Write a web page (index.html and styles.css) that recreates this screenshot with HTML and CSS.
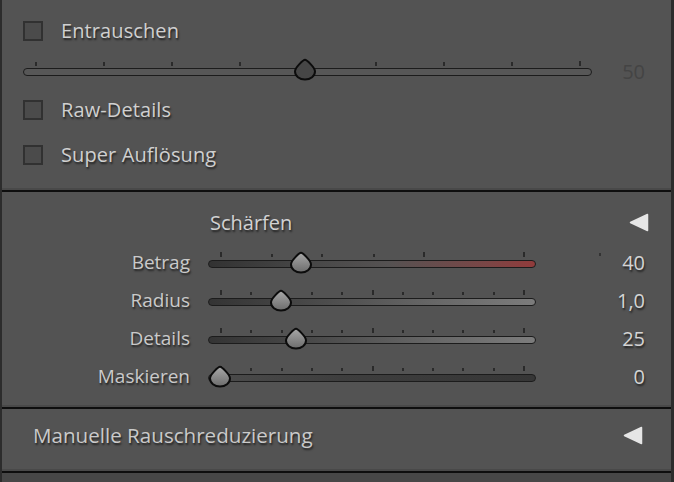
FILE: index.html
```html
<!DOCTYPE html>
<html>
<head>
<meta charset="utf-8">
<link rel="stylesheet" href="styles.css">
</head>
<body>
<div class="panel">
  <section class="sec sec-noise">
    <div class="check-row">
      <span class="box"></span><span class="label">Entrauschen</span>
    </div>
    <div class="noise-row">
      <div class="slider slider-noise">
        <div class="track t-plain"></div>
        <i class="tick" style="left:12px"></i>
        <i class="tick" style="left:80px"></i>
        <i class="tick" style="left:148px"></i>
        <i class="tick" style="left:216px"></i>
        <i class="tick" style="left:352px"></i>
        <i class="tick" style="left:420px"></i>
        <i class="tick" style="left:488px"></i>
        <i class="tick major" style="left:556px"></i>
        <svg class="thumb thumb-dark" style="left:270px" width="24" height="23" viewBox="0 0 24 23"><path d="M12 1.8 C13.6 1.8 22 9.5 22 13.5 A10 8 0 0 1 2 13.5 C2 9.5 10.4 1.8 12 1.8Z"/></svg>
      </div>
      <span class="value dim">50</span>
    </div>
    <div class="check-row raw">
      <span class="box"></span><span class="label">Raw-Details</span>
    </div>
    <div class="check-row super">
      <span class="box"></span><span class="label">Super Auflösung</span>
    </div>
  </section>

  <section class="sec sec-sharp">
    <div class="sharp-head">
      <span class="title">Schärfen</span>
      <svg class="tri" width="20" height="19" viewBox="0 0 20 19"><polygon points="1.5,9.5 18.5,1.5 18.5,17.5"/></svg>
    </div>
    <div class="sharp-grid">
      <span class="s-label">Betrag</span>
      <div class="slider">
        <div class="track t-red"></div>
        <i class="tick major" style="left:12px"></i>
        <i class="tick" style="left:63px"></i>
        <i class="tick" style="left:113px"></i>
        <i class="tick" style="left:165px"></i>
        <i class="tick major" style="left:215px"></i>
        <i class="tick major" style="left:315px"></i>
        <i class="tick stray" style="left:391px"></i>
        <svg class="thumb" style="left:81px" width="24" height="23" viewBox="0 0 24 23"><defs><linearGradient id="g1" x1="0" y1="0" x2="0" y2="1"><stop offset="0" stop-color="#a8a8a8"/><stop offset="1" stop-color="#6c6c6c"/></linearGradient></defs><path fill="url(#g1)" d="M12 1.8 C13.6 1.8 22 9.5 22 13.5 A10 8 0 0 1 2 13.5 C2 9.5 10.4 1.8 12 1.8Z"/></svg>
      </div>
      <span class="value">40</span>

      <span class="s-label">Radius</span>
      <div class="slider">
        <div class="track t-gray"></div>
        <i class="tick major" style="left:12px"></i>
        <i class="tick" style="left:42px"></i>
        <i class="tick" style="left:73px"></i>
        <i class="tick" style="left:103px"></i>
        <i class="tick" style="left:133px"></i>
        <i class="tick major" style="left:164px"></i>
        <i class="tick" style="left:194px"></i>
        <i class="tick" style="left:224px"></i>
        <i class="tick" style="left:254px"></i>
        <i class="tick" style="left:285px"></i>
        <i class="tick major" style="left:315px"></i>
        <svg class="thumb" style="left:61px" width="24" height="23" viewBox="0 0 24 23"><path fill="url(#g1)" d="M12 1.8 C13.6 1.8 22 9.5 22 13.5 A10 8 0 0 1 2 13.5 C2 9.5 10.4 1.8 12 1.8Z"/></svg>
      </div>
      <span class="value">1,0</span>

      <span class="s-label">Details</span>
      <div class="slider">
        <div class="track t-gray"></div>
        <i class="tick major" style="left:12px"></i>
        <i class="tick" style="left:42px"></i>
        <i class="tick" style="left:73px"></i>
        <i class="tick" style="left:103px"></i>
        <i class="tick" style="left:133px"></i>
        <i class="tick major" style="left:164px"></i>
        <i class="tick" style="left:194px"></i>
        <i class="tick" style="left:224px"></i>
        <i class="tick" style="left:254px"></i>
        <i class="tick" style="left:285px"></i>
        <i class="tick major" style="left:315px"></i>
        <svg class="thumb" style="left:76px" width="24" height="23" viewBox="0 0 24 23"><path fill="url(#g1)" d="M12 1.8 C13.6 1.8 22 9.5 22 13.5 A10 8 0 0 1 2 13.5 C2 9.5 10.4 1.8 12 1.8Z"/></svg>
      </div>
      <span class="value">25</span>

      <span class="s-label">Maskieren</span>
      <div class="slider">
        <div class="track t-dark"></div>
        <i class="tick major" style="left:12px"></i>
        <i class="tick" style="left:42px"></i>
        <i class="tick" style="left:73px"></i>
        <i class="tick" style="left:103px"></i>
        <i class="tick" style="left:133px"></i>
        <i class="tick major" style="left:164px"></i>
        <i class="tick" style="left:194px"></i>
        <i class="tick" style="left:224px"></i>
        <i class="tick" style="left:254px"></i>
        <i class="tick" style="left:285px"></i>
        <i class="tick major" style="left:315px"></i>
        <svg class="thumb" style="left:0px" width="24" height="23" viewBox="0 0 24 23"><path fill="url(#g1)" d="M12 1.8 C13.6 1.8 22 9.5 22 13.5 A10 8 0 0 1 2 13.5 C2 9.5 10.4 1.8 12 1.8Z"/></svg>
      </div>
      <span class="value">0</span>
    </div>
  </section>

  <section class="sec sec-manual">
    <span class="title">Manuelle Rauschreduzierung</span>
    <svg class="tri" width="20" height="19" viewBox="0 0 20 19"><polygon points="1.5,9.5 18.5,1.5 18.5,17.5"/></svg>
  </section>
  <div class="foot"></div>
</div>
</body>
</html>
```

FILE: styles.css
```css
* { box-sizing: border-box; }
html, body { margin: 0; padding: 0; }
body {
  width: 674px;
  height: 482px;
  overflow: hidden;
  background: #474747;
  font-family: "Open Sans", "Noto Sans", sans-serif;
  color: #d0d0d0;
}
.panel {
  width: 674px;
  height: 482px;
  display: flex;
  flex-direction: column;
  background: #535353;
  border-left: 2px solid #2c2c2c;
  border-right: 3px solid #2c2c2c;
}
.sec {
  border-bottom: 2px solid #0e0e0e;
  box-shadow: inset 0 -2px 0 #494949;
  flex: none;
}
.sec-noise {
  height: 192px;
  padding: 21px 0 0 21px;
  display: flex;
  flex-direction: column;
}
.check-row {
  height: 20px;
  display: flex;
  align-items: center;
  gap: 18px;
}
.check-row.raw { margin-top: 20px; }
.check-row.super { margin-top: 25px; }
.box {
  width: 20px;
  height: 20px;
  border: 2px solid #313131;
  background: #4b4b4b;
  flex: none;
}
.label, .title, .s-label, .value {
  text-shadow: 1px 2px 2px rgba(0,0,0,0.6);
  white-space: nowrap;
}
.label { font-size: 20px; line-height: 20px; letter-spacing: 0.1px; }
.noise-row {
  margin-top: 17px;
  height: 22px;
  display: grid;
  grid-template-columns: 569px 1fr;
  align-items: center;
}
.slider {
  position: relative;
  height: 38px;
  display: flex;
  align-items: center;
}
.slider-noise { height: 22px; }
.track {
  width: 100%;
  height: 8px;
  border: 1.6px solid #1c1c1c;
  border-radius: 4px;
}
.t-plain { background: #575757; }
.t-red { background: linear-gradient(to right, #323232 0%, #474747 30%, #555252 55%, #7a4646 85%, #913b3b 100%); }
.t-gray { background: linear-gradient(to right, #343434 0%, #4c4c4c 35%, #686868 70%, #7c7c7c 100%); }
.t-dark { background: linear-gradient(to right, #4c4c4c 0%, #3e3e3e 40%, #363636 100%); }
.tick {
  position: absolute;
  width: 1.5px;
  height: 3px;
  top: 9px;
  background: #2a2a2a;
}
.tick.major { height: 5px; top: 7px; }
.tick.stray { top: 8px; height: 3px; background: #333; }
.slider-noise .tick { top: 1px; height: 4px; }
.slider-noise .tick.major { top: 0px; height: 5px; }
.thumb {
  position: absolute;
  top: 5.5px;
  overflow: visible;
}
.slider-noise .thumb { top: -2.5px; }
.thumb path {
  stroke: #0c0c0c;
  stroke-width: 2;
  stroke-linejoin: round;
}
.thumb-dark path { fill: #464646; }
.value {
  font-size: 20px;
  text-align: right;
  padding-right: 26px;
  color: #d4d4d4;
}
.value.dim { color: #444444; text-shadow: none; }
.sec-sharp {
  height: 217px;
  padding: 10px 0 0 0;
}
.sharp-head {
  height: 40px;
  display: flex;
  align-items: center;
  justify-content: space-between;
  padding: 0 22px 0 208px;
}
.title { font-size: 20px; color: #d2d2d2; }
.tri { flex: none; }
.tri polygon {
  fill: #e6e6e6;
  stroke: #e6e6e6;
  stroke-width: 1.5;
  stroke-linejoin: round;
}
.sharp-grid {
  margin-top: 3px;
  display: grid;
  grid-template-columns: 188px 328px 1fr;
  grid-auto-rows: 38px;
  column-gap: 18px;
  align-items: center;
}
.s-label {
  font-size: 19px;
  text-align: right;
  margin-top: -5px;
  color: #cacaca;
}
.sharp-grid .value { margin-top: -3px; }
.sec-manual {
  height: 64px;
  display: flex;
  align-items: center;
  justify-content: space-between;
  padding: 0 28px 10px 31px;
}
.sec-manual .title { font-size: 20.6px; color: #cacaca; }
.foot { flex: 1; background: #474747; }
```
